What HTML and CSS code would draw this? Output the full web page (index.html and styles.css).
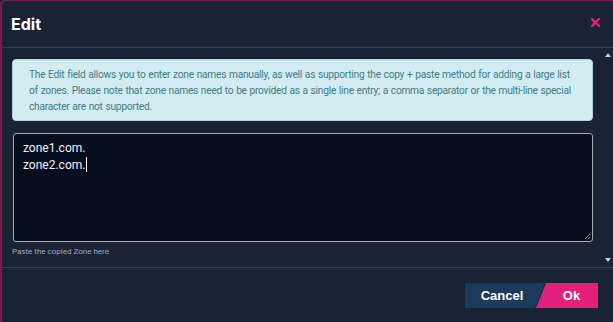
FILE: index.html
```html
<!DOCTYPE html>
<html>

<head>
  <meta charset="UTF-8">
  <title>Edit</title>
  <link rel="stylesheet" href="styles.css">
</head>

<body>
  <div class="modal">
    <div class="modalHeader">
      <span class="modalTitle">Edit</span>
      <svg class="closeIcon" width="9" height="9" viewBox="0 0 9 9">
        <path d="M1 1L8 8M8 1L1 8" stroke="#e3207c" stroke-width="2.4" stroke-linecap="square" />
      </svg>
    </div>
    <div class="modalBody">
      <div class="bodyContent">
        <div class="infoBox">
          The Edit field allows you to enter zone names manually, as well as supporting the copy + paste method for adding a large list<br>of zones. Please note that zone names need to be provided as a single line entry; a comma separator or the multi-line special character are not supported.
        </div>
        <div class="zoneField">
          <div class="zoneText">zone1.com.<br>zone2.com.<span class="caret"></span></div>
          <svg class="grip" width="7" height="7" viewBox="0 0 7 7">
            <path d="M6 1L1 6M6 4L4 6" stroke="#8a909a" stroke-width="1" />
          </svg>
        </div>
        <div class="hint">Paste the copied Zone here</div>
      </div>
      <div class="scrollBar">
        <span class="arrowUp"></span>
        <span class="arrowDown"></span>
      </div>
    </div>
    <div class="modalFooter">
      <button class="butt cancelButt">Cancel</button>
      <button class="butt okButt">Ok</button>
    </div>
  </div>
</body>

</html>
```

FILE: styles.css
```css
body {
  margin: 0;
  padding: 0;
  background-color: #1a2236;
  font-family: Roboto, "Liberation Sans", sans-serif;
}

.modal {
  height: 322px;
  box-sizing: border-box;
  border-top: 1px solid #7e1c50;
  border-left: 2px solid #7e1c50;
  border-top-left-radius: 5px;
  background-color: #1a2236;
  display: flex;
  flex-direction: column;
}

.modalHeader {
  height: 46px;
  padding: 0 13px 0 9px;
  display: flex;
  justify-content: space-between;
  align-items: center;
  border-bottom: 1px solid #3a404d;
}

.modalTitle {
  color: white;
  font-family: Inter, sans-serif;
  font-weight: bold;
  font-size: 16px;
}

.closeIcon {
  margin-top: -3px;
}

.modalBody {
  height: 219px;
  display: flex;
  border-bottom: 1px solid #3a404d;
}

.bodyContent {
  flex: 1;
  padding: 11px 9px 0 10px;
}

.infoBox {
  background-color: #d3ecf1;
  border: 1px solid #aed3db;
  border-radius: 4px;
  padding: 7px 12px 5px 16px;
  color: #407c89;
  font-size: 10.2px;
  letter-spacing: -0.25px;
  word-spacing: 0.5px;
  line-height: 16px;
}

.zoneField {
  position: relative;
  margin-top: 12px;
  margin-left: 1px;
  background-color: #060e1e;
  border: 1px solid #a4aab3;
  border-radius: 3px;
  padding: 6px 9px;
  box-sizing: border-box;
  height: 109px;
}

.zoneText {
  color: #f2f4f7;
  font-size: 12px;
  line-height: 17px;
}

.caret {
  display: inline-block;
  width: 1px;
  height: 15px;
  margin-left: 1px;
  background-color: white;
  vertical-align: -3px;
}

.grip {
  position: absolute;
  right: 1px;
  bottom: 1px;
}

.hint {
  margin-top: 5px;
  color: #a3a9b3;
  font-size: 8px;
}

.scrollBar {
  width: 11px;
  display: flex;
  flex-direction: column;
  justify-content: space-between;
  align-items: center;
  padding: 5px 0 5px 0;
}

.arrowUp {
  width: 0;
  height: 0;
  border-left: 3.5px solid transparent;
  border-right: 3.5px solid transparent;
  border-bottom: 4px solid #c9cdd3;
}

.arrowDown {
  width: 0;
  height: 0;
  border-left: 3.5px solid transparent;
  border-right: 3.5px solid transparent;
  border-top: 4px solid #c9cdd3;
}

.modalFooter {
  flex: 1;
  display: flex;
  justify-content: flex-end;
  align-items: flex-start;
  padding: 15px 15px 0 0;
}

.butt {
  height: 25px;
  border: none;
  padding: 0;
  color: white;
  font-family: "Liberation Sans", Arial, sans-serif;
  font-weight: bold;
  font-size: 13px;
}

.cancelButt {
  width: 80px;
  background-color: #1b3a5c;
  clip-path: polygon(0 0, 100% 0, calc(100% - 10px) 100%, 0 100%);
  padding-right: 6px;
}

.okButt {
  width: 62px;
  margin-left: -9px;
  background-color: #e3207c;
  clip-path: polygon(10px 0, 100% 0, 100% 100%, 0 100%);
  padding-left: 9px;
}
```
